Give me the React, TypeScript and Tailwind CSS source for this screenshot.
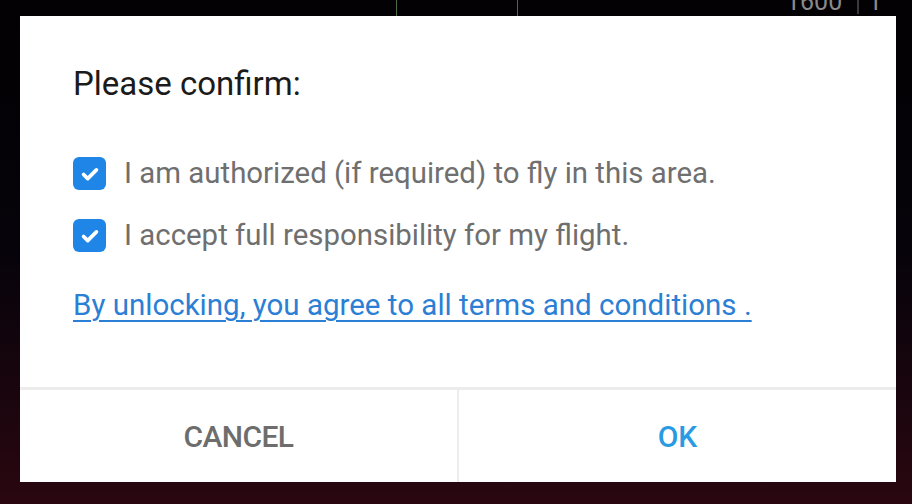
import React from 'react';

// ─── Confirm dialog over a dark map view ───

function CheckIcon() {
  return (
    <svg viewBox="0 0 24 24" className="h-[22px] w-[22px]" fill="none" stroke="white" strokeWidth={4} strokeLinecap="round" strokeLinejoin="round">
      <path d="M5 12.5l4.5 4.5L19 7.5" />
    </svg>
  );
}

function CheckRow({ label }: { label: string }) {
  return (
    <div className="flex h-[33px] items-center gap-[18px]">
      <span className="flex h-[33px] w-[33px] shrink-0 items-center justify-center rounded-[6px] bg-[#1f86e8]">
        <CheckIcon />
      </span>
      <span className="text-[29.4px] leading-none text-[#6f6f6f]">{label}</span>
    </div>
  );
}

export default function App() {
  return (
    <div
      className="relative h-[504px] w-[912px] overflow-hidden bg-gradient-to-b from-[#030104] via-[#07030a] to-[#2a0610] pl-[20px] pt-[16px]"
      style={{ fontFamily: 'Roboto, "Noto Sans", sans-serif' }}
    >
      {/* map bits peeking above the dialog */}
      <div className="absolute left-[396px] top-0 h-[16px] w-px bg-[#4b6b45]" />
      <div className="absolute left-[517px] top-0 h-[16px] w-px bg-[#4b6b45]" />
      <div className="absolute left-[786px] top-[-11px] text-[25px] leading-none text-[#8a8a8a]">1600</div>
      <div className="absolute left-[857px] top-0 h-[14px] w-[2px] bg-[#3a3a3a]" />
      <div className="absolute left-[868px] top-[-11px] text-[25px] leading-none text-[#8a8a8a]">1</div>

      <div className="relative flex h-[466px] w-[876px] flex-col bg-white">
        <div className="flex flex-1 flex-col pl-[53px] pt-[48px]">
          <h1 className="text-[33px] leading-[39px] text-[#1b1b1b]">Please confirm:</h1>
          <div className="mt-[54px] flex flex-col gap-[29px]">
            <CheckRow label="I am authorized (if required) to fly in this area." />
            <CheckRow label="I accept full responsibility for my flight." />
          </div>
          <a className="mt-[36px] text-[29.5px] leading-[34px] text-[#2b7fd4] underline decoration-[2px] underline-offset-[5px]">
            By unlocking, you agree to all terms and conditions .
          </a>
        </div>
        <div className="h-[3px] bg-[#ececec]" />
        <div className="flex h-[92px]">
          <button className="flex flex-1 items-center justify-center text-[30px] font-medium tracking-[-0.6px] text-[#6d6d6d]">
            CANCEL
          </button>
          <div className="w-[2px] bg-[#ececec]" />
          <button className="flex flex-1 items-center justify-center text-[30px] font-medium text-[#2a9be2]">
            OK
          </button>
        </div>
      </div>
    </div>
  );
}
